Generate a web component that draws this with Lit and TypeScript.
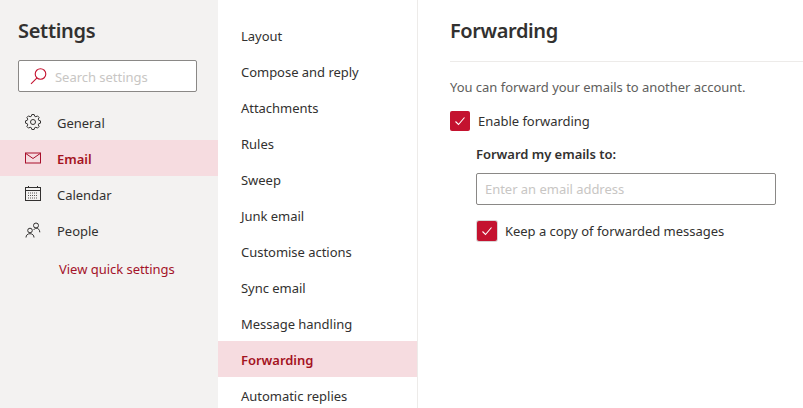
import { LitElement, html, css, svg } from "lit";
import { customElement } from "lit/decorators.js";

function gearPath(): string {
  const pts: string[] = [];
  const teeth = 8;
  for (let i = 0; i < teeth; i++) {
    const a = (i / teeth) * Math.PI * 2 - Math.PI / 2;
    const step = (Math.PI * 2) / teeth;
    const seq: [number, number][] = [[6.0, -0.5], [7.6, -0.26], [7.6, 0.26], [6.0, 0.5]];
    for (const [r, o] of seq) {
      const t = a + o * step * 0.72;
      pts.push(`${(8 + r * Math.cos(t)).toFixed(2)} ${(8 + r * Math.sin(t)).toFixed(2)}`);
    }
  }
  return "M" + pts.join("L") + "Z";
}

const icons: Record<string, unknown> = {
  General: svg`<g fill="none" stroke="currentColor" stroke-width="1"><circle cx="8" cy="8" r="2.500"/><path stroke-linejoin="round" d=${gearPath()}/></g>`,
  Email: svg`<g fill="none" stroke="currentColor" stroke-width="1"><rect x=".5" y="3" width="15" height="10"/><path d="M.8 3.500l7.200 5 7.200-5"/></g>`,
  Calendar: svg`<g fill="none" stroke="currentColor" stroke-width="1"><rect x=".5" y="1.500" width="15" height="13"/><path d="M.5 4.500h15M3.500 0v2M12.500 0v2"/><path stroke-dasharray="1 1" d="M3 7h10M3 9.500h10M3 12h10" stroke-opacity=".8"/></g>`,
  People: svg`<g fill="none" stroke="currentColor" stroke-width="1"><circle cx="5" cy="8.500" r="2.300"/><path d="M1 15.500c0-2.300 1.600-3.800 4-3.800s4 1.500 4 3.800"/><circle cx="11" cy="3.500" r="2.500"/><path d="M8.700 8c.6-1 1.300-1.800 2.400-1.800 2.300 0 3.700 1.700 3.700 4.100"/></g>`,
};

@customElement("app-root")
export class AppRoot extends LitElement {
  static styles = css`
    :host { display: block; width: 803px; height: 408px; overflow: hidden; background: #fff;
      font-family: "Noto Sans", "Open Sans", sans-serif; font-size: 13px; color: #323130; letter-spacing: -0.03px; }
    .page { display: grid; grid-template-columns: 218px 200px 1fr; height: 408px; }
    .left { background: #f3f2f1; padding-top: 17px; }
    h1 { margin: 0 0 0 18px; font-size: 20px; line-height: 28px; font-weight: 600; letter-spacing: -0.3px; }
    .search { margin: 15px 0 12px 18px; box-sizing: border-box; width: 179px; height: 32px; background: #fff;
      border: 1px solid #8a8886; border-radius: 2px; display: flex; align-items: center; padding-left: 11px; gap: 8px; color: #c8c6c4; }
    .search svg { color: #c4122f; flex: none; }
    .search span { padding-top: 2px; }
    .nav { height: 36px; display: flex; align-items: center; }
    .nav svg { margin-left: 25px; margin-right: 16px; flex: none; color: #323130; }
    .nav span { padding-top: 2px; }
    .on { background: #f6dce0; color: #a4131f; font-weight: 600; }
    .nav.on svg { color: #a80f2b; }
    .quick { margin: 11px 0 0 59px; line-height: 20px; color: #a4132a; }
    .mid { border-right: 1px solid #edebe9; padding-top: 17px; }
    .mitem { height: 36px; line-height: 38px; padding-left: 23px; }
    .content { padding-left: 32px; }
    h2 { margin: 0; padding-top: 17px; height: 28px; padding-bottom: 16px; font-size: 20px; line-height: 28px; font-weight: 600; letter-spacing: -0.4px; border-bottom: 1px solid #edebe9; }
    .desc { margin-top: 15px; line-height: 20px; color: #605e5c; }
    .check { display: flex; align-items: center; gap: 8px; }
    .first { margin-top: 14px; }
    .box { box-sizing: border-box; width: 20px; height: 20px; border-radius: 2px; background: #c4122f; display: flex; align-items: center; justify-content: center; flex: none; }
    .sub { margin-left: 26px; }
    .label { margin-top: 13px; line-height: 20px; font-weight: 600; }
    .field { margin-top: 9px; box-sizing: border-box; width: 300px; height: 32px; border: 1px solid #8a8886; border-radius: 2px; padding-left: 8px; display: flex; align-items: center; color: #c8c6c4; }
    .second { margin: 16px 0 0 1px; }
    .second .box { box-shadow: 0 0 0 1px #d9d5d5; }
  `;

  render() {
    const check = html`<span class="box"><svg width="12" height="12" viewBox="0 0 12 12" fill="none" stroke="#fff" stroke-width="1.100"><path d="M1.500 6.500l3 3 6-7"/></svg></span>`;
    const mids = ["Layout","Compose and reply","Attachments","Rules","Sweep","Junk email","Customise actions","Sync email","Message handling","Forwarding","Automatic replies"];
    return html`<div class="page">
      <aside class="left">
        <h1>Settings</h1>
        <div class="search"><svg width="17" height="17" viewBox="0 0 17 17" fill="none" stroke="currentColor" stroke-width="1.100"><circle cx="10.500" cy="6" r="5.300"/><path d="M7 9.800L1 15.800"/></svg><span>Search settings</span></div>
        ${Object.keys(icons).map(n => html`<div class="nav ${n === "Email" ? "on" : ""}"><svg width="16" height="16" viewBox="0 0 16 16">${icons[n]}</svg><span>${n}</span></div>`)}
        <div class="quick">View quick settings</div>
      </aside>
      <nav class="mid">${mids.map(m => html`<div class="mitem ${m === "Forwarding" ? "on" : ""}">${m}</div>`)}</nav>
      <main class="content">
        <h2>Forwarding</h2>
        <div class="desc">You can forward your emails to another account.</div>
        <div class="check first">${check}<span>Enable forwarding</span></div>
        <div class="sub">
          <div class="label">Forward my emails to:</div>
          <div class="field">Enter an email address</div>
          <div class="check second">${check}<span>Keep a copy of forwarded messages</span></div>
        </div>
      </main>
    </div>`;
  }
}
